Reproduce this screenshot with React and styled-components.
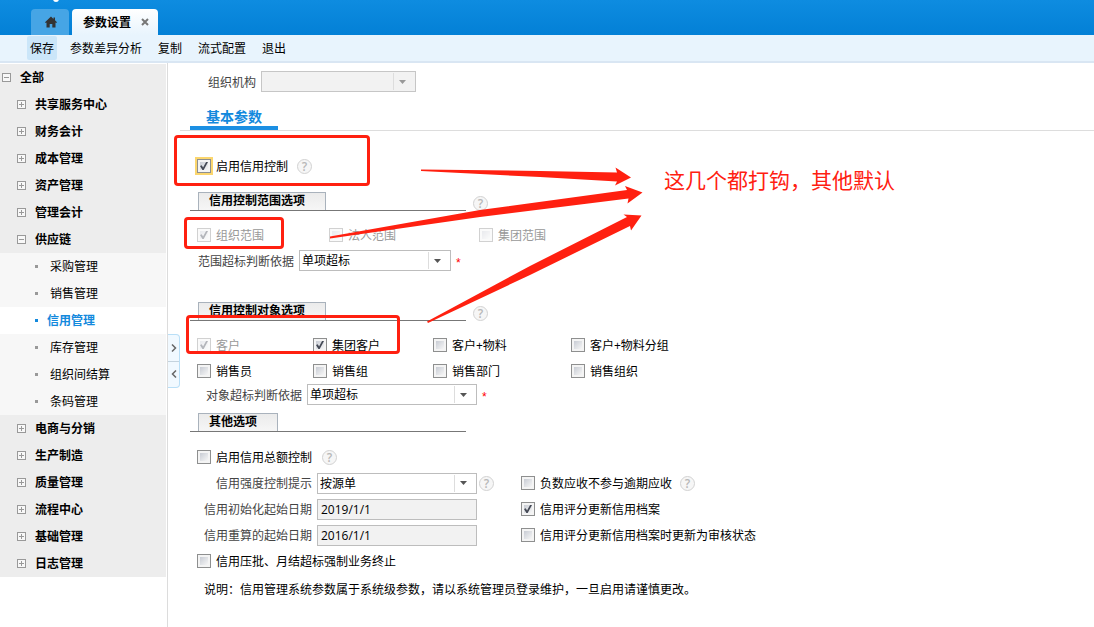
import React from 'react';
import styled, { createGlobalStyle } from 'styled-components';

const GlobalStyle = createGlobalStyle`
    * {
        box-sizing: border-box;
    }

    body {
        margin: 0;
        background: #fff;
    }

    body, button, input, select {
        font-family: "Open Sans", "Noto Sans CJK SC", sans-serif;
        font-size: 12px;
        color: #000;
    }

    button {
        border: 0;
        padding: 0;
        background: none;
    }
`

const Page = styled.div`
    min-height: 100vh;
    display: flex;
    flex-direction: column;
`

const TopBar = styled.header`
    position: relative;
    height: 35px;
    padding-left: 31px;
    display: flex;
    align-items: flex-end;
    gap: 3px;
    background: linear-gradient(#0e8ce0, #0380d6);
    overflow: hidden;
`

const LogoDot = styled.i`
    position: absolute;
    left: 53px;
    top: -4px;
    width: 6px;
    height: 6px;
    border-radius: 50%;
    background: #fff;
`

const HomeTab = styled.button`
    width: 38px;
    height: 26px;
    padding-left: 2px;
    display: flex;
    align-items: center;
    justify-content: center;
    border-radius: 4px 4px 0 0;
    background: #46a5e5;
    color: #333;
`

const PageTab = styled.div`
    width: 86px;
    height: 26px;
    padding-left: 11px;
    display: flex;
    align-items: center;
    gap: 10px;
    border-radius: 4px 4px 0 0;
    background: linear-gradient(#fff, #e8f4fd);
    font-weight: bold;
    white-space: nowrap;

    button {
        display: flex;
        color: #777;
    }
`

const Toolbar = styled.nav`
    height: 28px;
    padding: 1px 0 1px 27px;
    display: flex;
    gap: 10px;
    background: #e8f4fd;
    border-bottom: 2px solid #d9e6f3;

    button {
        height: 24px;
        padding: 0 3px;
        border-radius: 2px;
        white-space: nowrap;
    }

    button:first-child {
        background: #cbe6f9;
    }
`

const Body = styled.div`
    flex: 1;
    display: flex;
`

const Sidebar = styled.aside`
    flex: none;
    width: 168px;
    padding: 1px 1px 0 0;
    border-right: 1px solid #dcdcdc;
`

const TreeItem = styled.a`
    height: 27px;
    padding-left: ${props => [2, 17, 35][props.$level]}px;
    padding-bottom: 1px;
    display: flex;
    align-items: center;
    gap: ${props => (props.$level < 2 ? 9 : props.$active ? 9 : 12)}px;
    background: ${props => (props.$active ? '#fff' : props.$level < 2 ? '#ededed' : '#f7f7f7')};
    color: ${props => (props.$active ? '#1389dd' : '#000')};
    font-weight: ${props => (props.$level < 2 || props.$active ? 'bold' : 'normal')};
    text-decoration: none;
`

const Bullet = styled.i`
    width: 3px;
    height: 3px;
    background: ${props => (props.$active ? '#1389dd' : '#999')};
`

const Content = styled.main`
    position: relative;
    flex: 1;
    min-width: 0;
    padding-top: 8px;
`

const Splitter = styled.div`
    position: absolute;
    left: 0;
    top: 271px;
    width: 12px;
    height: 54px;
    display: flex;
    flex-direction: column;
    border: 1px solid #b9dff7;
    border-left: 0;
    border-radius: 0 4px 4px 0;
    background: #f1f9ff;

    button {
        flex: 1;
        display: flex;
        align-items: center;
        justify-content: center;
    }

    button + button {
        border-top: 1px solid #c4d3de;
    }
`

const FieldRow = styled.div`
    min-height: 21px;
    margin-top: ${props => props.$top || 0}px;
    display: flex;
    align-items: center;
`

const FieldLabel = styled.label`
    width: ${props => props.$width}px;
    margin-right: 5px;
    text-align: right;
    color: #444;
    white-space: nowrap;
`

const SelectBox = styled.span`
    position: relative;
    display: block;
    width: ${props => props.$width}px;

    select {
        display: block;
        appearance: none;
        width: 100%;
        height: 21px;
        padding: 0 24px 0 2px;
        border: 1px solid #bdbdbd;
        border-radius: 0;
        background: #fff;
        opacity: 1;
    }

    select:disabled {
        border-color: #c6c6c6;
        background: #f2f2f2;
    }
`

const SelectArrow = styled.span`
    position: absolute;
    right: 3px;
    top: 2px;
    width: 20px;
    height: 17px;
    padding-right: 2px;
    display: flex;
    align-items: center;
    justify-content: center;
    border-left: 1px solid #ddd;
    color: ${props => (props.$disabled ? '#999' : '#555')};
    pointer-events: none;
`

const DateInput = styled.input`
    width: 160px;
    height: 21px;
    padding: 0 3px;
    border: 1px solid #bdbdbd;
    background: #f2f2f2;
`

const Required = styled.span`
    margin-left: 5px;
    padding-top: 4px;
    color: #f00;
    font-family: "Liberation Sans", sans-serif;
    line-height: 14px;
`

const ParamTabs = styled.div`
    margin: 14px 0 22px 12px;
    padding-left: 10px;
    border-bottom: 1px solid #ddd;

    button {
        display: block;
        width: 88px;
        height: 24px;
        border-bottom: 4px solid #1b8fe3;
        color: #1389dd;
        font-size: 14px;
        font-weight: bold;
        line-height: 22px;
    }
`

const CheckGrid = styled.div`
    margin-top: ${props => props.$top || 0}px;
    padding-left: 29px;
    display: grid;
    grid-template-columns: ${props => props.$columns || '1fr'};
    grid-auto-rows: 26px;
    align-items: center;
`

const CheckLabel = styled.label`
    display: flex;
    align-items: center;
    gap: 5px;
    color: ${props => (props.$disabled ? '#999' : '#000')};
    white-space: nowrap;
`

const CheckInput = styled.input`
    appearance: none;
    position: relative;
    flex: none;
    width: 14px;
    height: 14px;
    margin: 0;
    padding: 2px;
    border: 1px solid #8e8f8f;
    background: linear-gradient(135deg, #c8ccd4, #f6f6f6) content-box, #f4f4f4;
    outline: ${props => (props.$focused ? '2px solid #fbd66e' : 'none')};
    opacity: ${props => (props.disabled ? '0.4' : '1')};

    &:checked::after {
        content: "";
        position: absolute;
        left: 2px;
        top: 2px;
        width: 8px;
        height: 8px;
        background: #454a56;
        clip-path: polygon(0 50%, 22% 42%, 38% 68%, 76% 0, 100% 0, 46% 100%, 30% 100%);
    }
`

const Help = styled.button`
    flex: none;
    width: 15px;
    height: 15px;
    margin-left: ${props => props.$left || 2}px;
    border: 1px solid #d2d2d2;
    border-radius: 50%;
    background: #f6f6f6;
    color: #b8b8b8;
    font-size: 12px;
    font-weight: 600;
    line-height: 13px;
    text-align: center;
`

const SectionHead = styled.div`
    height: 19px;
    margin: ${props => props.$top}px 0 0 22px;
    display: flex;
    align-items: flex-end;
`

const SectionLine = styled.div`
    width: 276px;
    padding-left: 8px;
    display: flex;
    border-bottom: 1px solid #777;

    h3 {
        height: 18px;
        margin: 0;
        padding: 0 20px 0 10px;
        border: 1px solid #a9b2bc;
        border-bottom: 0;
        background: linear-gradient(#ebebeb, #f6f6f6);
        font-size: 12px;
        line-height: 16px;
    }
`

const SplitRow = styled.div`
    display: grid;
    grid-template-columns: 353px 1fr;
    align-items: center;
    min-height: 26px;
`

const CheckCell = styled.div`
    display: flex;
    align-items: center;
`

const Remark = styled.p`
    margin: 3px 0 0 36px;
    line-height: 26px;
`

const Annotations = styled.div`
    position: absolute;
    left: 0;
    top: 0;
    pointer-events: none;

    svg {
        display: block;
    }
`

const Frame = styled.span`
    position: absolute;
    left: ${props => props.$x}px;
    top: ${props => props.$y}px;
    width: ${props => props.$w}px;
    height: ${props => props.$h}px;
    border: 3px solid #ff2010;
    border-radius: 4px;
`

const Callout = styled.span`
    position: absolute;
    left: 496px;
    top: 102px;
    color: #ff2010;
    font-size: 21px;
    line-height: 30px;
    white-space: nowrap;
`

const tree = [
    { text: '全部', level: 0, open: true },
    { text: '共享服务中心', level: 1 },
    { text: '财务会计', level: 1 },
    { text: '成本管理', level: 1 },
    { text: '资产管理', level: 1 },
    { text: '管理会计', level: 1 },
    { text: '供应链', level: 1, open: true },
    { text: '采购管理', level: 2 },
    { text: '销售管理', level: 2 },
    { text: '信用管理', level: 2, active: true },
    { text: '库存管理', level: 2 },
    { text: '组织间结算', level: 2 },
    { text: '条码管理', level: 2 },
    { text: '电商与分销', level: 1 },
    { text: '生产制造', level: 1 },
    { text: '质量管理', level: 1 },
    { text: '流程中心', level: 1 },
    { text: '基础管理', level: 1 },
    { text: '日志管理', level: 1 },
];

function Toggle({ open }) {
    return (
        <svg width="9" height="9" viewBox="0 0 9 9" fill="none" stroke="#999" shapeRendering="crispEdges">
            <rect x="0.5" y="0.5" width="8" height="8" fill="#f8f8f8" />
            <path d={open ? 'M2 4.5h5' : 'M2 4.5h5M4.5 2v5'} />
        </svg>
    )
}

function Chevron({ d }) {
    return (
        <svg width="6" height="8" viewBox="0 0 6 8" fill="none" stroke="#666" strokeWidth="1.5">
            <path d={d} />
        </svg>
    )
}

function Select({ id, width, value, disabled }) {
    return (
        <SelectBox $width={width}>
            <select id={id} disabled={disabled}>
                <option>{value}</option>
            </select>
            <SelectArrow $disabled={disabled}>
                <svg width="7" height="4" viewBox="0 0 7 4" fill="currentColor">
                    <path d="M0 0h7L3.500 4z" />
                </svg>
            </SelectArrow>
        </SelectBox>
    )
}

function Check({ text, checked, disabled, focused }) {
    return (
        <CheckLabel $disabled={disabled}>
            <CheckInput type="checkbox" defaultChecked={checked} disabled={disabled} $focused={focused} />
            {text}
        </CheckLabel>
    )
}

function HelpIcon({ left }) {
    return <Help type="button" aria-label="帮助" $left={left}>?</Help>
}

function Section({ title, top, help }) {
    return (
        <SectionHead $top={top}>
            <SectionLine><h3>{title}</h3></SectionLine>
            {help && <HelpIcon left={7} />}
        </SectionHead>
    )
}

export default function App() {
    return (
        <Page>
            <GlobalStyle />
            <TopBar>
                <LogoDot />
                <HomeTab type="button" aria-label="首页">
                    <svg width="12" height="12" viewBox="0 0 12 12" fill="currentColor">
                        <path d="M6 0.500L8.500 2.900V1.500H10V4.300L12 6.300L11.200 7L10.500 6.500V11.500H7.300V8H4.700V11.500H1.500V6.500L0.800 7L0 6.300z" />
                    </svg>
                </HomeTab>
                <PageTab>
                    参数设置
                    <button type="button" aria-label="关闭">
                        <svg width="8" height="8" viewBox="0 0 8 8" stroke="currentColor" strokeWidth="2">
                            <path d="M1 1l6 6M7 1L1 7" />
                        </svg>
                    </button>
                </PageTab>
            </TopBar>
            <Toolbar>
                {['保存', '参数差异分析', '复制', '流式配置', '退出'].map(text => (
                    <button type="button" key={text}>{text}</button>
                ))}
            </Toolbar>

            <Body>
                <Sidebar>
                    {tree.map(item => (
                        <TreeItem href="#" key={item.text} $level={item.level} $active={item.active}>
                            {item.level < 2 ? <Toggle open={item.open} /> : <Bullet $active={item.active} />}
                            {item.text}
                        </TreeItem>
                    ))}
                </Sidebar>

                <Content>
                    <FieldRow>
                        <FieldLabel htmlFor="org" $width={88}>组织机构</FieldLabel>
                        <Select id="org" width={155} value="" disabled />
                    </FieldRow>
                    <ParamTabs>
                        <button type="button">基本参数</button>
                    </ParamTabs>

                    <CheckGrid>
                        <CheckCell>
                            <Check text="启用信用控制" checked focused />
                            <HelpIcon left={9} />
                        </CheckCell>
                    </CheckGrid>

                    <Section title="信用控制范围选项" top={13} help />
                    <CheckGrid $top={11} $columns="132px 150px 1fr">
                        <Check text="组织范围" checked disabled />
                        <Check text="法人范围" disabled />
                        <Check text="集团范围" disabled />
                    </CheckGrid>
                    <FieldRow $top={2}>
                        <FieldLabel htmlFor="scope" $width={126}>范围超标判断依据</FieldLabel>
                        <Select id="scope" width={152} value="单项超标" />
                        <Required>*</Required>
                    </FieldRow>

                    <Section title="信用控制对象选项" top={31} help />
                    <CheckGrid $top={11} $columns="116px 120px 138px 1fr">
                        <Check text="客户" checked disabled />
                        <Check text="集团客户" checked />
                        <Check text="客户+物料" />
                        <Check text="客户+物料分组" />
                        <Check text="销售员" />
                        <Check text="销售组" />
                        <Check text="销售部门" />
                        <Check text="销售组织" />
                    </CheckGrid>
                    <FieldRow>
                        <FieldLabel htmlFor="target" $width={134}>对象超标判断依据</FieldLabel>
                        <Select id="target" width={170} value="单项超标" />
                        <Required>*</Required>
                    </FieldRow>

                    <Section title="其他选项" top={8} />
                    <CheckGrid $top={12}>
                        <CheckCell>
                            <Check text="启用信用总额控制" />
                            <HelpIcon left={10} />
                        </CheckCell>
                    </CheckGrid>
                    <SplitRow>
                        <FieldRow>
                            <FieldLabel htmlFor="strength" $width={144}>信用强度控制提示</FieldLabel>
                            <Select id="strength" width={160} value="按源单" />
                            <HelpIcon />
                        </FieldRow>
                        <CheckCell>
                            <Check text="负数应收不参与逾期应收" />
                            <HelpIcon left={8} />
                        </CheckCell>
                    </SplitRow>
                    <SplitRow>
                        <FieldRow>
                            <FieldLabel htmlFor="initDate" $width={144}>信用初始化起始日期</FieldLabel>
                            <DateInput id="initDate" defaultValue="2019/1/1" readOnly />
                        </FieldRow>
                        <Check text="信用评分更新信用档案" checked />
                    </SplitRow>
                    <SplitRow>
                        <FieldRow>
                            <FieldLabel htmlFor="recalcDate" $width={144}>信用重算的起始日期</FieldLabel>
                            <DateInput id="recalcDate" defaultValue="2016/1/1" readOnly />
                        </FieldRow>
                        <Check text="信用评分更新信用档案时更新为审核状态" />
                    </SplitRow>
                    <CheckGrid>
                        <Check text="信用压批、月结超标强制业务终止" />
                    </CheckGrid>
                    <Remark>说明：信用管理系统参数属于系统级参数，请以系统管理员登录维护，一旦启用请谨慎更改。</Remark>

                    <Splitter>
                        <button type="button" aria-label="展开"><Chevron d="M1 0.500L4.500 4L1 7.500" /></button>
                        <button type="button" aria-label="收起"><Chevron d="M5 0.500L1.500 4L5 7.500" /></button>
                    </Splitter>

                    <Annotations>
                        <svg width="480" height="270" viewBox="168 63 480 270" fill="#ff2010">
                            <path d="M421 169.500L540 171L617 172.500L615.500 167.500L631 177.500L615 185.500L617 181.500L540 177L421 171z" />
                            <path d="M330 236.500L480 210L627 190L625 186L642.500 192.500L627.500 203.500L628.500 198.500L480 217L330 238.500z" />
                            <path d="M427 321.500L530 266L627 217L623.500 214.500L641.500 215.500L631 230.500L630 226L530 275L428 323z" />
                        </svg>
                        <Frame $x={6} $y={72} $w={196} $h={51} />
                        <Frame $x={16} $y={154} $w={100} $h={32} />
                        <Frame $x={18} $y={252} $w={214} $h={39} />
                        <Callout>这几个都打钩，其他默认</Callout>
                    </Annotations>
                </Content>
            </Body>
        </Page>
    )
}
